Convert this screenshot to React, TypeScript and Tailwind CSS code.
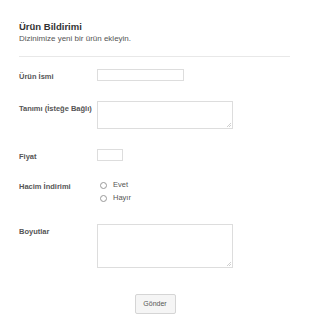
import { useState } from 'react'

const label = 'w-[78px] shrink-0 pt-[3px] text-[7.5px] leading-[9px] font-bold text-[#555]'
const field = 'border border-[#ddd] bg-white outline-none'

function Area({ h }: { h: string }) {
  return (
    <div className="relative">
      <textarea className={`${field} block w-[136px] resize-none ${h}`} />
      <svg className="pointer-events-none absolute right-[2px] bottom-[2px]" width="5" height="5" viewBox="0 0 5 5">
        <path d="M5 1L1 5M5 3L3 5" stroke="#bbb" strokeWidth="0.7" />
      </svg>
    </div>
  )
}

export default function App() {
  const [discount, setDiscount] = useState<string | null>(null)

  return (
    <div className="min-h-[333px] w-[310px] bg-white px-[19px] pt-[21px] font-['Liberation_Sans',Arial,sans-serif]">
      <h1 className="text-[9.5px] leading-[11px] font-bold text-[#333]">Ürün Bildirimi</h1>
      <p className="mt-[2px] text-[8px] leading-[10px] text-[#555]">Dizinimize yeni bir ürün ekleyin.</p>
      <div className="mt-[12px] mr-px h-px bg-[#e8e8e8]" />

      <form className="mt-[12px]" onSubmit={e => e.preventDefault()}>
        <div className="mb-[20px] flex">
          <label className={label}>Ürün İsmi</label>
          <input type="text" className={`${field} h-[12px] w-[87px]`} />
        </div>

        <div className="mb-[20px] flex">
          <label className={label}>Tanımı (İsteğe Bağlı)</label>
          <Area h="h-[28px]" />
        </div>

        <div className="mb-[18px] flex">
          <label className={label}>Fiyat</label>
          <input type="text" className={`${field} h-[12px] w-[26px]`} />
        </div>

        <div className="mb-[19px] flex">
          <label className={label}>Hacim İndirimi</label>
          <div className="flex flex-col pl-[3px]">
            {['Evet', 'Hayır'].map(opt => (
              <label key={opt} className="flex h-[13px] items-center gap-[6px] text-[7.5px] text-[#555]">
                <span
                  onClick={() => setDiscount(opt)}
                  className="flex h-[7px] w-[7px] items-center justify-center rounded-full border border-[#999] bg-white"
                >
                  {discount === opt && <span className="h-[3px] w-[3px] rounded-full bg-[#555]" />}
                </span>
                <span className="-mt-[2px]">{opt}</span>
              </label>
            ))}
          </div>
        </div>

        <div className="flex">
          <label className={label}>Boyutlar</label>
          <Area h="h-[44px]" />
        </div>

        <div className="mt-[26px] flex justify-center">
          <button type="submit" className="h-[20px] w-[41px] rounded-[2px] border border-[#d5d5d5] bg-[#f5f5f5] text-[7px] text-[#555]">
            Gönder
          </button>
        </div>
      </form>
    </div>
  )
}
